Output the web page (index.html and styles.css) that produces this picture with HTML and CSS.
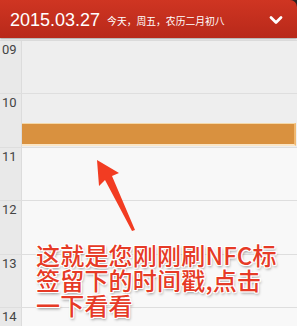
FILE: index.html
```html
<!DOCTYPE html>
<html>
<head>
<meta charset="utf-8">
<link rel="stylesheet" href="styles.css">
</head>
<body>
<div class="app">
  <div class="header-wrap">
    <header class="header">
      <span class="date">2015.03.27</span>
      <span class="sub">今天，周五，农历二月初八</span>
      <svg class="chev" width="14" height="10" viewBox="0 0 14 10"><path d="M2 2.5 L7 7.5 L12 2.5" fill="none" stroke="#fff" stroke-width="2.8" stroke-linecap="round" stroke-linejoin="round"/></svg>
    </header>
  </div>
  <div class="grid">
    <div class="row past"><div class="time">09</div><div class="cell"></div></div>
    <div class="row past"><div class="time">10</div><div class="cell"><div class="event"></div></div></div>
    <div class="row"><div class="time">11</div><div class="cell"></div></div>
    <div class="row"><div class="time">12</div><div class="cell"></div></div>
    <div class="row"><div class="time">13</div><div class="cell"></div></div>
    <div class="row"><div class="time">14</div><div class="cell"></div></div>
  </div>
  <svg class="arrow" width="297" height="326" viewBox="0 0 297 326"><polygon points="97,160 119,173 112,176 135,230 132,231 105,180 99,186" fill="#f23c22"/></svg>
  <div class="note">这就是您刚刚刷NFC标<br>签留下的时间戳,点击<br>一下看看</div>
</div>
</body>
</html>
```
FILE: styles.css
```css
html, body {
  margin: 0;
  padding: 0;
}
body {
  width: 297px;
  height: 326px;
  overflow: hidden;
  background: #f8f8f8;
  font-family: Roboto, "Liberation Sans", sans-serif;
}
.app {
  position: relative;
  width: 297px;
  height: 326px;
  overflow: hidden;
}
.header-wrap {
  background: #2e2424;
}
.header {
  height: 38px;
  display: flex;
  align-items: center;
  padding-left: 10px;
  padding-right: 14px;
  background: linear-gradient(#cf3522, #b8291a);
  border-top-right-radius: 7px;
  box-shadow: 0 1px 2px rgba(0,0,0,0.35);
  position: relative;
  z-index: 2;
}
.date {
  color: #fff;
  font-family: "Liberation Sans", Arial, sans-serif;
  font-size: 18px;
  margin-top: 2px;
}
.sub {
  color: #fff;
  font-family: "Noto Sans CJK SC", sans-serif;
  font-size: 9.8px;
  margin-left: 7px;
  margin-top: 4px;
}
.chev {
  margin-left: auto;
  margin-top: 2px;
}
.grid {
  margin-top: 2px;
  display: flex;
  flex-direction: column;
}
.row {
  height: 53.4px;
  display: flex;
  border-top: 1px solid #dedede;
  box-sizing: border-box;
}
.time {
  width: 22px;
  flex: none;
  background: #e9e9e9;
  border-right: 1px solid #dcdcdc;
  box-sizing: border-box;
  font-size: 13px;
  color: #444;
  padding-left: 2px;
  padding-top: 2px;
  line-height: 14px;
}
.cell {
  flex: 1;
  position: relative;
  background: #f8f8f8;
}
.past .cell {
  background: #eeeeee;
}
.event {
  position: absolute;
  left: 0;
  right: 1px;
  top: 29px;
  height: 20px;
  background: #d9913f;
  border-top: 1px solid #f4d8a8;
  border-bottom: 2px solid #fbe6c6;
  border-right: 2px solid #f0b870;
}
.arrow {
  position: absolute;
  left: 0;
  top: 0;
  z-index: 3;
}
.note {
  position: absolute;
  left: 36px;
  top: 242px;
  z-index: 4;
  font-family: "Noto Sans CJK SC", sans-serif;
  font-weight: 500;
  font-size: 24px;
  line-height: 25px;
  color: #e63a26;
  letter-spacing: 0.2px;
  text-shadow: 1px 0 0 #fff, -1px 0 0 #fff, 0 1px 0 #fff, 0 -1px 0 #fff, 1px 1px 0 #fff, -1px -1px 0 #fff, 1px -1px 0 #fff, -1px 1px 0 #fff, 1px 2px 3px rgba(0,0,0,0.45);
}
```
